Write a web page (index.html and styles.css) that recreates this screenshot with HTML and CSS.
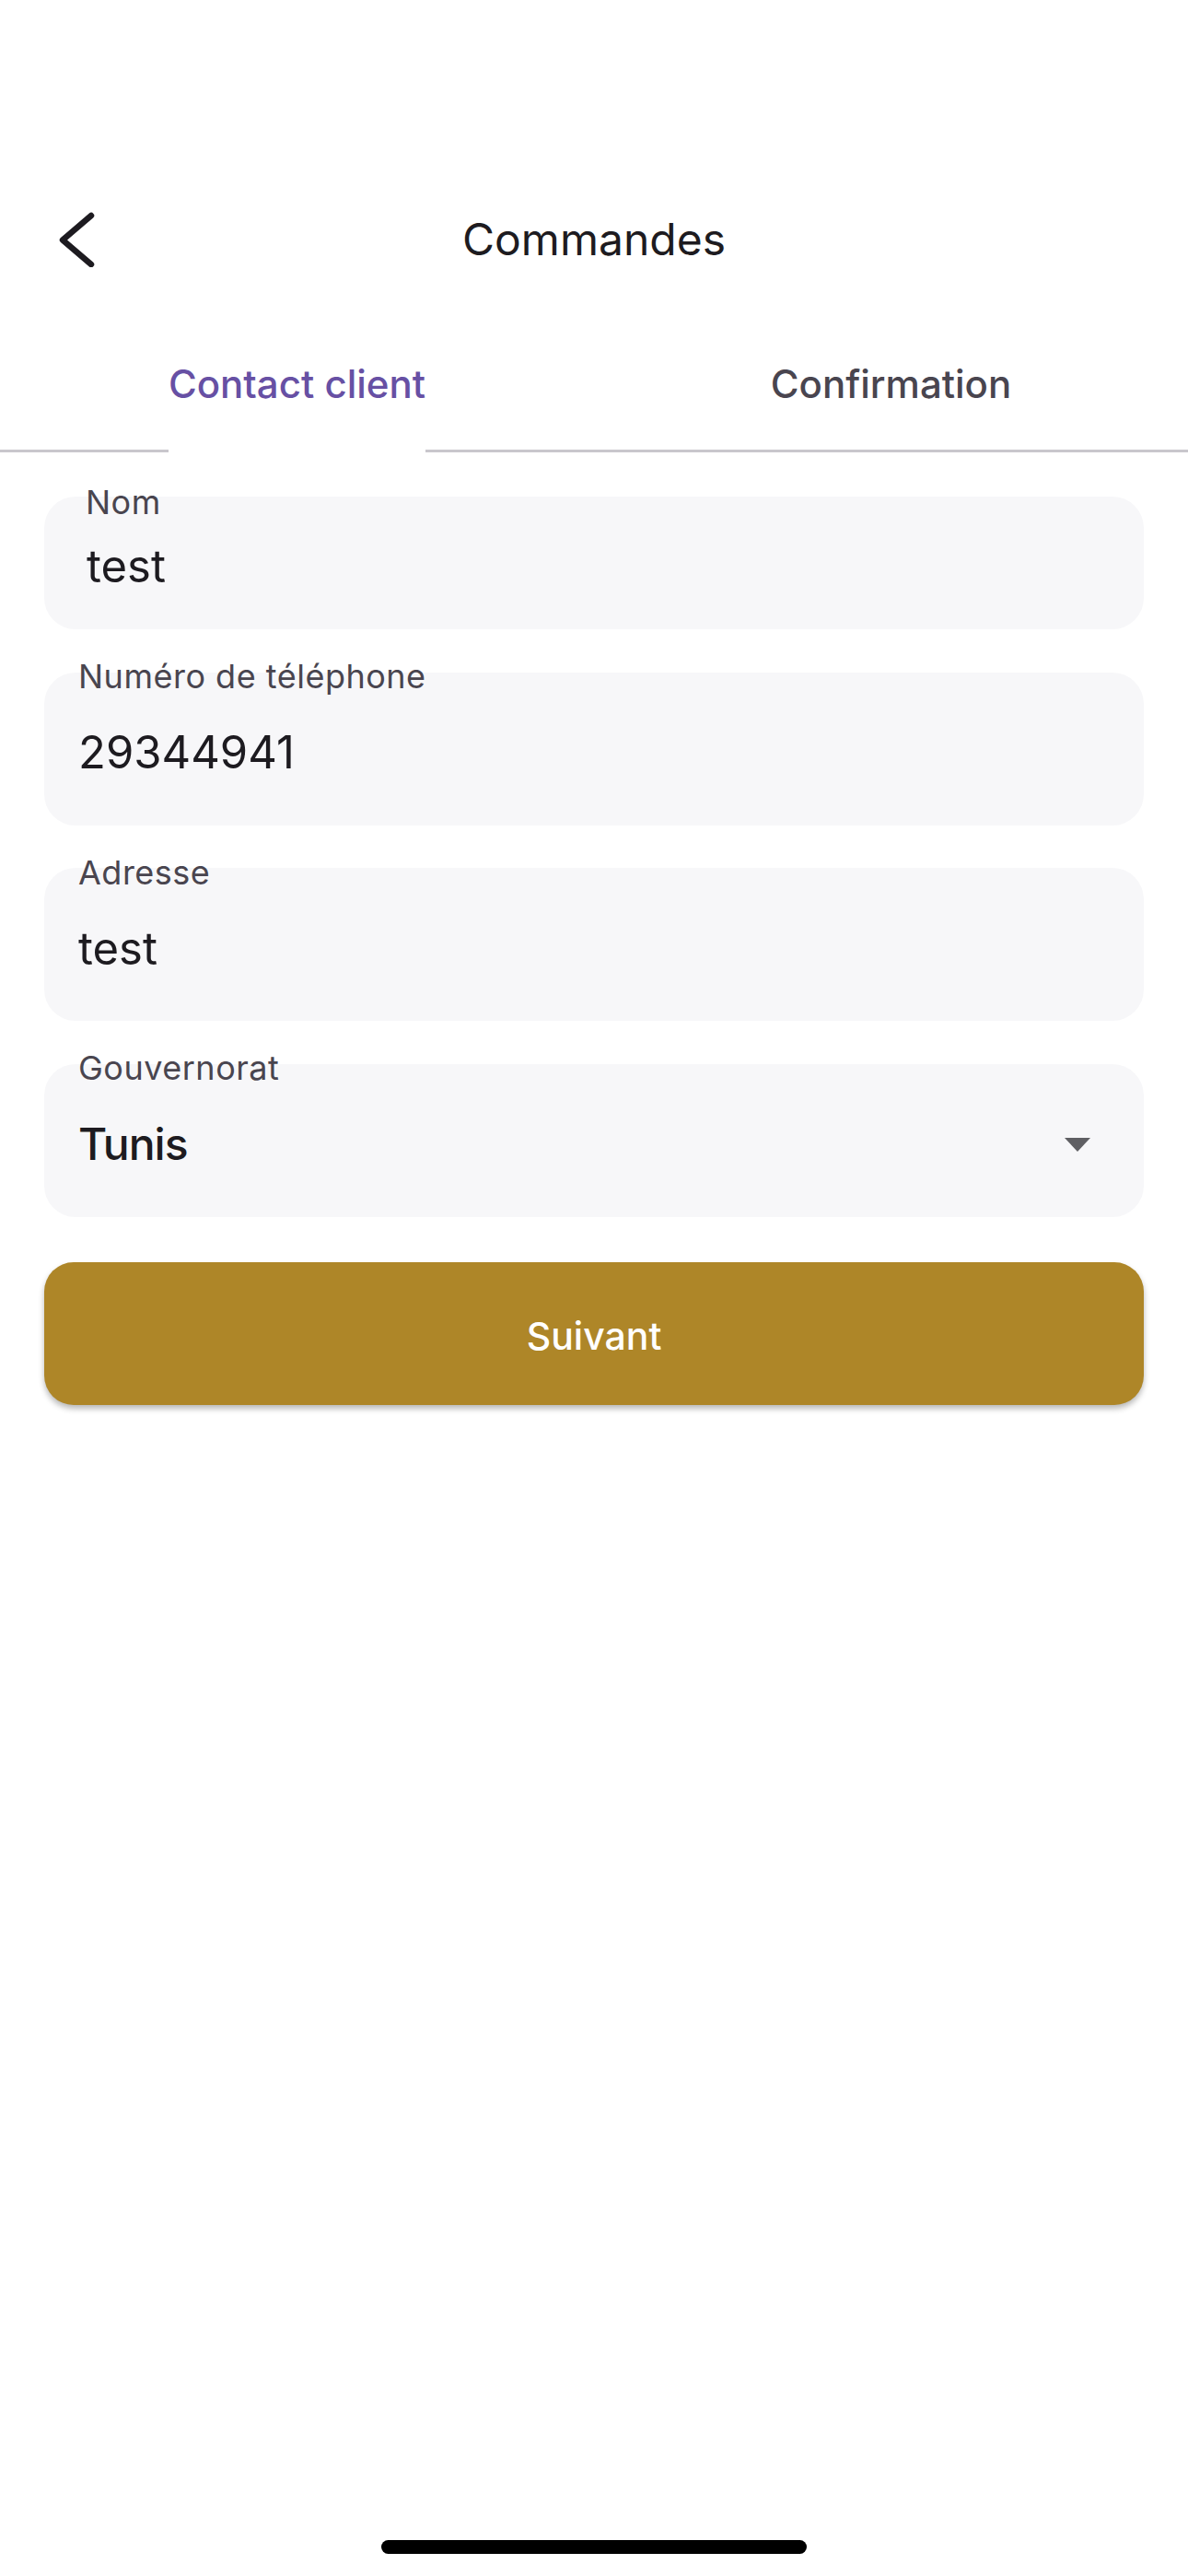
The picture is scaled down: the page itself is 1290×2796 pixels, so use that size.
FILE: index.html
```html
<!DOCTYPE html>
<html lang="fr">
<head>
    <meta charset="UTF-8">
    <meta name="viewport" content="width=device-width, initial-scale=1.0">
    <title>Commandes</title>
    <link rel="stylesheet" href="styles.css">
</head>
<body>
    <div class="status-space"></div>

    <header class="appbar">
        <button class="back" aria-label="Retour">
            <svg width="40" height="60" viewBox="0 0 40 60">
                <path d="M35 4 L4 30.5 L35 57" fill="none" stroke="#1d1b20" stroke-width="6.5" stroke-linecap="round" stroke-linejoin="round"/>
            </svg>
        </button>
        <h1 class="title">Commandes</h1>
        <span></span>
    </header>

    <nav class="tabs">
        <div class="tab"><span class="tab-label active">Contact client</span></div>
        <div class="tab"><span class="tab-label">Confirmation</span></div>
    </nav>

    <form class="form" onsubmit="return false">
        <div class="field field-nom">
            <label class="field-label">Nom</label>
            <div class="field-box">
                <span class="field-value">test</span>
            </div>
        </div>

        <div class="field">
            <label class="field-label">Numéro de téléphone</label>
            <div class="field-box">
                <span class="field-value">29344941</span>
            </div>
        </div>

        <div class="field">
            <label class="field-label">Adresse</label>
            <div class="field-box">
                <span class="field-value">test</span>
            </div>
        </div>

        <div class="field">
            <label class="field-label">Gouvernorat</label>
            <div class="field-box select">
                <span class="field-value strong">Tunis</span>
                <span class="caret"></span>
            </div>
        </div>

        <button class="next" type="button">Suivant</button>
    </form>

    <div class="home-indicator"></div>
</body>
</html>
```

FILE: styles.css
```css
body {
    margin: 0;
    width: 1290px;
    min-height: 2796px;
    display: flex;
    flex-direction: column;
    background: #ffffff;
    font-family: 'Inter', 'Liberation Sans', sans-serif;
    color: #1d1b20;
}

.status-space {
    height: 200px;
}

.appbar {
    height: 120px;
    display: grid;
    grid-template-columns: 1fr auto 1fr;
    align-items: center;
}
.back {
    justify-self: start;
    margin-left: 64px;
    padding: 0;
    border: none;
    background: none;
    display: flex;
    cursor: pointer;
}
.title {
    margin: 0;
    font-size: 48px;
    font-weight: 400;
    line-height: 60px;
    color: #1d1b20;
}

.tabs {
    display: grid;
    grid-template-columns: 1fr 1fr;
    border-bottom: 3px solid #c9c7cc;
}
.tab {
    display: flex;
    justify-content: center;
}
.tab-label {
    padding: 72px 0 46px;
    font-size: 42px;
    font-weight: 500;
    line-height: 50px;
    color: #49454f;
}
.tab-label.active {
    color: #6750a4;
    border-bottom: 3px solid #ffffff;
    margin-bottom: -3px;
}

.form {
    display: flex;
    flex-direction: column;
    padding: 0 48px;
}
.field {
    display: flex;
    flex-direction: column;
    margin-top: 31px;
}
.field-label {
    position: relative;
    padding-left: 37px;
    margin-bottom: -24.5px;
    font-size: 36px;
    letter-spacing: 0.5px;
    line-height: 40px;
    color: #49454f;
}
.field-box {
    display: flex;
    align-items: center;
    justify-content: space-between;
    padding: 57.5px 58px 48.5px 37px;
    border-radius: 34px;
    background: #f7f7f9;
}
.field-value {
    font-size: 49px;
    line-height: 60px;
    color: #1d1b20;
}
.field-value.strong {
    font-size: 48px;
    font-weight: 500;
    letter-spacing: -1px;
}

.field-nom {
    margin-top: 33.5px;
}
.field-nom .field-label {
    padding-left: 45px;
    margin-bottom: -25.5px;
}
.field-nom .field-box {
    padding: 45.5px 58px 38.5px 46px;
}

.caret {
    width: 0;
    height: 0;
    border-left: 14.5px solid transparent;
    border-right: 14.5px solid transparent;
    border-top: 15px solid #5f5f63;
}

.next {
    margin-top: 49px;
    height: 155px;
    padding: 6px 0 0;
    border: none;
    border-radius: 32px;
    background: #ae8628;
    color: #ffffff;
    font-family: 'Inter', 'Liberation Sans', sans-serif;
    font-size: 41px;
    font-weight: 500;
    box-shadow: 0 4px 6px rgba(0, 0, 0, 0.28);
    cursor: pointer;
}

.home-indicator {
    margin: auto auto 24px;
    width: 462px;
    height: 15px;
    border-radius: 8px;
    background: #000000;
}
```
